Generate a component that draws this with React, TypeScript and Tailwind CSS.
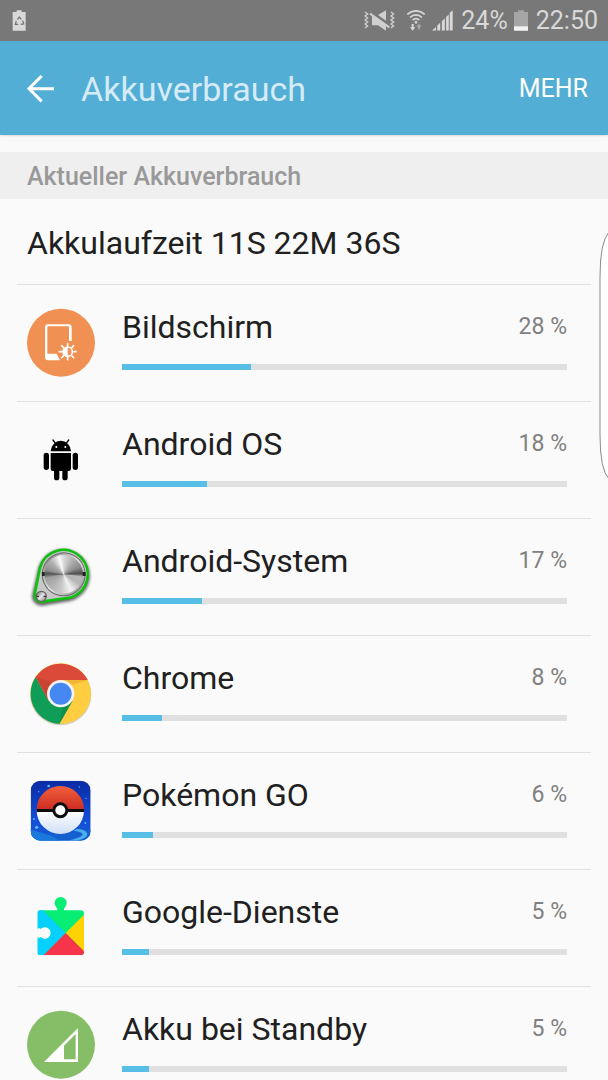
import type { ReactNode } from 'react';

interface Usage {
  name: string;
  percent: number;
  bar: number;
  icon: ReactNode;
}

const iconClass = 'w-[68px] h-[68px] shrink-0 mt-6 overflow-visible';

function ScreenIcon() {
  return (
    <svg viewBox="51 54 204 204" className={iconClass} aria-hidden="true">
      <circle cx="153" cy="155" r="102" fill="#f09052" />
      <path
        fillRule="evenodd"
        d="M114 100H176Q185 100 185 109V150H177V107Q177 106 175 106H115Q112 106 112 109V188H140L150 208H114Q105 208 105 199V109Q105 100 114 100Z"
        fill="#fff"
      />
      <g stroke="#fff" strokeWidth="5" strokeLinecap="round">
        <path d="M173 158V164M173 200V206M148 182H154M192 182H198M155 164L160 169M186 195L191 200M155 200L160 195M186 169L191 164" />
        <circle cx="173" cy="182" r="14" fill="none" strokeWidth="5" />
      </g>
      <path d="M173 168A14 14 0 0 0 173 196Z" fill="#fff" />
    </svg>
  );
}

function AndroidIcon() {
  return (
    <svg viewBox="21 16 204 204" className={iconClass} aria-hidden="true">
      <path d="M92 92A30 31 0 0 1 153 92Z" />
      <path d="M99 58L107 69M146 58L138 69" stroke="#000" strokeWidth="4" strokeLinecap="round" />
      <circle cx="109" cy="79" r="3" fill="#fff" />
      <circle cx="136" cy="79" r="3" fill="#fff" />
      <path d="M92 97H153V144Q153 151 146 151H99Q92 151 92 144Z" />
      <rect x="71" y="96" width="16" height="52" rx="8" />
      <rect x="158" y="96" width="16" height="52" rx="8" />
      <rect x="102" y="130" width="16" height="49" rx="8" />
      <rect x="127" y="130" width="16" height="49" rx="8" />
    </svg>
  );
}

function SystemIcon() {
  return (
    <svg viewBox="21 38 204 204" className={iconClass} aria-hidden="true">
      <defs>
        <filter id="systemBlur" x="-20%" y="-20%" width="140%" height="140%">
          <feGaussianBlur stdDeviation="5" />
        </filter>
        <linearGradient id="systemRim" x1="0" y1="0" x2="1" y2="1">
          <stop offset="0" stopColor="#777" />
          <stop offset="0.5" stopColor="#e4e4e4" />
          <stop offset="1" stopColor="#888" />
        </linearGradient>
      </defs>
      <path
        d="M60 112A73 73 0 1 1 150 202L66 216A22 22 0 0 1 42 192Z"
        fill="#000"
        stroke="#000"
        strokeWidth="12"
        opacity="0.6"
        filter="url(#systemBlur)"
        transform="translate(0 4)"
      />
      <path
        d="M60 112A73 73 0 1 1 150 202L66 214A20 20 0 0 1 44 192Z"
        fill="#c8c8c8"
        stroke="#10c010"
        strokeWidth="8"
      />
      <circle cx="131" cy="132" r="66" fill="#6a6a6a" />
      <circle cx="131" cy="132" r="63" fill="url(#systemRim)" />
      <foreignObject x="73" y="74" width="116" height="116">
        <div className="w-[116px] h-[116px] rounded-full bg-[conic-gradient(#d8d8d8_0deg,#b4b4b4_30deg,#8c8c8c_65deg,#4c4c4c_88deg,#b8b8b8_98deg,#b4b4b4_120deg,#f2f2f2_155deg,#c8c8c8_190deg,#b0b0b0_230deg,#a0a0a0_258deg,#505050_272deg,#909090_284deg,#b0b0b0_315deg,#fafafa_345deg,#d8d8d8_360deg)]" />
      </foreignObject>
      <path d="M66 125H74V137H66ZM188 125H197V137H188Z" fill="#222" />
      <circle cx="64" cy="198" r="17" fill="#666" />
      <circle cx="64" cy="198" r="13" fill="url(#systemRim)" />
      <path d="M50 198H57M71 198H78" stroke="#333" strokeWidth="4" />
    </svg>
  );
}

function ChromeIcon() {
  return (
    <svg viewBox="21 30 204 204" className={iconClass} aria-hidden="true">
      <circle cx="122" cy="134" r="92" fill="#000" opacity="0.18" />
      <circle cx="122" cy="131" r="91" fill="#ffcd40" />
      <path d="M47 81L86 152L158 152L118 222A91 91 0 0 1 47 81Z" fill="#109d58" />
      <path d="M47 81A91 91 0 0 1 203 90H122L86 152Z" fill="#db4a38" />
      <path d="M47 81L98 98L86 152Z" fill="#b8392b" opacity="0.5" />
      <path d="M122 90H203L160 104Z" fill="#e8a92a" opacity="0.6" />
      <path d="M158 152L118 222L128 170Z" fill="#0b8043" opacity="0.4" />
      <circle cx="122" cy="131" r="41" fill="#f4f4f4" />
      <circle cx="122" cy="131" r="33" fill="#4688f1" />
    </svg>
  );
}

function PokemonIcon() {
  return (
    <svg viewBox="21 22 204 204" className={iconClass} aria-hidden="true">
      <defs>
        <linearGradient id="pokeSky" x1="0" y1="0" x2="0" y2="1">
          <stop offset="0" stopColor="#0a2aa4" />
          <stop offset="0.7" stopColor="#1450d8" />
          <stop offset="1" stopColor="#1857d0" />
        </linearGradient>
        <linearGradient id="pokeRed" x1="0" y1="0" x2="0" y2="1">
          <stop offset="0" stopColor="#f2603c" />
          <stop offset="1" stopColor="#cc2c22" />
        </linearGradient>
        <linearGradient id="pokeWhite" x1="0" y1="0" x2="0" y2="1">
          <stop offset="0" stopColor="#fff" />
          <stop offset="1" stopColor="#d0dff6" />
        </linearGradient>
        <clipPath id="pokeClip">
          <rect x="32" y="33" width="180" height="180" rx="30" />
        </clipPath>
      </defs>
      <g clipPath="url(#pokeClip)">
        <rect x="32" y="33" width="180" height="180" fill="url(#pokeSky)" />
        <path d="M32 178Q75 196 122 192T212 180V213H32Z" fill="#1560cf" />
        <path d="M32 180Q70 190 96 200L120 213H32Z" fill="#1b78dc" />
        <path d="M160 184Q198 188 184 200Q174 206 144 213H168Q204 206 202 192Q196 178 170 178Z" fill="#4aaeee" />
        <g fill="#5eb5f5">
          <circle cx="86" cy="49" r="4" />
          <circle cx="56" cy="66" r="2" />
          <circle cx="178" cy="52" r="2" />
          <circle cx="198" cy="86" r="2" />
          <circle cx="50" cy="173" r="5" />
          <circle cx="42" cy="148" r="3" />
          <circle cx="196" cy="160" r="3" />
        </g>
      </g>
      <path d="M50 120A71 71 0 0 1 192 120Z" fill="url(#pokeRed)" />
      <path d="M50 122A71 71 0 0 0 192 122Z" fill="url(#pokeWhite)" />
      <path d="M50 118H192V127H50Z" fill="#0b0b0b" />
      <circle cx="121" cy="122" r="24" fill="#0b0b0b" />
      <circle cx="121" cy="122" r="15" fill="#fff" />
    </svg>
  );
}

function GoogleServicesIcon() {
  return (
    <svg viewBox="21 28 204 204" className={iconClass} aria-hidden="true">
      <defs>
        <clipPath id="puzzleClip">
          <path d="M62 77H112Q113 72 108 66A18 18 0 1 1 136 66Q131 72 132 77H182Q192 77 192 87V202Q192 212 182 212H62Q52 212 52 202V158Q58 162 62 158A18 18 0 1 0 62 132Q58 128 52 132V87Q52 77 62 77Z" />
        </clipPath>
      </defs>
      <g clipPath="url(#puzzleClip)">
        <rect x="52" y="30" width="140" height="182" fill="#08ee75" />
        <path d="M52 60L137 145L52 230Z" fill="#05d0fe" />
        <path d="M192 90L137 145L192 200Z" fill="#ffd200" />
        <path d="M137 145L205 213H69Z" fill="#f6354a" />
      </g>
    </svg>
  );
}

function StandbyIcon() {
  return (
    <svg viewBox="51 35 204 204" className={iconClass} aria-hidden="true">
      <circle cx="153" cy="136" r="102" fill="#86be68" />
      <path fillRule="evenodd" d="M204 86V188H102ZM197 104L162 139V180H197Z" fill="#fff" />
    </svg>
  );
}

const usages: Usage[] = [
  { name: 'Bildschirm', percent: 28, bar: 29, icon: <ScreenIcon /> },
  { name: 'Android OS', percent: 18, bar: 19, icon: <AndroidIcon /> },
  { name: 'Android-System', percent: 17, bar: 18, icon: <SystemIcon /> },
  { name: 'Chrome', percent: 8, bar: 9, icon: <ChromeIcon /> },
  { name: 'Pokémon GO', percent: 6, bar: 7, icon: <PokemonIcon /> },
  { name: 'Google-Dienste', percent: 5, bar: 6, icon: <GoogleServicesIcon /> },
  { name: 'Akku bei Standby', percent: 5, bar: 6, icon: <StandbyIcon /> },
];

function StatusBar() {
  return (
    <div className="h-[41px] shrink-0 bg-[#787878] flex items-center pl-3 pr-[10px] text-[#d9d9d9]">
      <svg viewBox="34 28 42 63" className="w-[14px] h-[21px] mr-auto" aria-hidden="true">
        <path d="M48 29H63V34H75V90H36V34H48Z" fill="#d9d9d9" />
        <g fill="none" stroke="#787878" strokeWidth="4">
          <path d="M50 57L56 49L62 56" />
          <path d="M66 60L69 70L60 71" />
          <path d="M53 71H44L47 61" />
        </g>
      </svg>

      {/* Mute, wifi and mobile signal */}
      <svg viewBox="40 28 93 63" className="w-[31px] h-[21px] mr-3" aria-hidden="true">
        <g fill="none" stroke="#d0d0d0" strokeWidth="4">
          <path d="M43 34L51 40L43 46L51 52L43 58L51 64L43 70L51 76L43 82" />
          <path d="M121 34L129 40L121 46L129 52L121 58L129 64L121 70L129 76L121 82" />
        </g>
        <path d="M82 43L106 29V60ZM64 45L106 74V90L82 74H64Z" fill="#d0d0d0" />
        <path d="M58 39L116 80" stroke="#d0d0d0" strokeWidth="6" />
      </svg>
      <svg viewBox="168 28 54 63" className="w-[18px] h-[21px] mr-[7px]" aria-hidden="true">
        <g fill="none" stroke="#d9d9d9" strokeWidth="5">
          <path d="M169 41Q195 20 221 41" />
          <path d="M177 50Q195 35 213 50" />
          <path d="M185 58Q195 50 205 58" />
        </g>
        <circle cx="195" cy="65" r="4" fill="#d9d9d9" />
        <path d="M182 70H188V80H193L185 90L177 80H182Z" fill="#d9d9d9" />
        <path d="M201 86H207V78H212L204 69L196 78H201Z" fill="#a8a8a8" />
      </svg>
      <svg viewBox="242 28 64 63" className="w-[21px] h-[21px] mr-2" aria-hidden="true">
        <path
          d="M242 90L254 79V90ZM258 75L267 66V90H258ZM272 62L281 53V90H272ZM285 49L293 41V90H285ZM296 37L305 28V90H296Z"
          fill="#d9d9d9"
        />
      </svg>

      <span className="text-[25px] leading-8 mr-[6px]">24%</span>
      <svg viewBox="486 28 42 63" className="w-[14px] h-[21px] mr-2" aria-hidden="true">
        <path d="M498 29H516V34H528V90H486V34H498Z" fill="#a6a6a6" />
        <path d="M486 77H528V90H486Z" fill="#f2f2f2" />
      </svg>
      <span className="text-[25px] leading-8">22:50</span>
    </div>
  );
}

function UsageRow({ name, percent, bar, icon }: Usage) {
  return (
    <li className="mx-[17px] px-[10px] h-[117px] shrink-0 border-t border-[#e0e0e0] flex">
      {icon}
      <div className="flex-1 min-w-0 ml-[27px] mr-[14px] pt-[22px]">
        <div className="flex items-center justify-between">
          <span className="text-[32px] leading-10 text-[#202020]">{name}</span>
          <span className="text-[23px] leading-10 text-[#808080]">{percent} %</span>
        </div>
        <div
          className="mt-[17px] h-1.5 bg-[#e0e0e0]"
          role="progressbar"
          aria-label={name}
          aria-valuenow={percent}
          aria-valuemin={0}
          aria-valuemax={100}
        >
          <div className="h-full bg-[#57bfe6]" style={{ width: `${bar}%` }} />
        </div>
      </div>
    </li>
  );
}

export default function App() {
  return (
    <div className="relative h-screen overflow-hidden flex flex-col bg-[#fafafa] font-[Roboto,sans-serif]">
      <StatusBar />

      {/* App bar */}
      <header className="h-[94px] shrink-0 bg-[#52aed5] flex items-center pl-[27px] pr-5 pt-px shadow-sm">
        <button type="button" aria-label="Zurück" className="mr-[26px] cursor-pointer">
          <svg viewBox="81 222 84 84" className="w-7 h-7" aria-hidden="true">
            <path d="M162 263H88M125 225L87 263L125 301" fill="none" stroke="#fff" strokeWidth="9" />
          </svg>
        </button>
        <h1 className="text-[34px] leading-10 text-[#d6ebf5]">Akkuverbrauch</h1>
        <button type="button" className="ml-auto text-[25px] leading-8 text-white cursor-pointer">
          MEHR
        </button>
      </header>

      <main className="flex-1 min-h-0 overflow-y-auto [scrollbar-width:none] pt-[17px]">
        <h2 className="h-[47px] px-[27px] pt-[3px] flex items-center bg-[#efefef] text-[25px] font-medium text-[#999]">
          Aktueller Akkuverbrauch
        </h2>
        <p className="h-[85px] px-[27px] pt-[3px] flex items-center text-[32px] leading-10 text-[#202020]">
          Akkulaufzeit 11S 22M 36S
        </p>
        <ul className="flex flex-col">
          {usages.map((usage) => (
            <UsageRow key={usage.name} {...usage} />
          ))}
        </ul>
      </main>

      {/* Edge panel handle */}
      <svg viewBox="0 0 9 248" className="absolute right-0 top-[232px] w-[9px] h-[248px]" aria-hidden="true">
        <path d="M10 0Q1 10 1 45V203Q1 238 10 247" fill="#fff" stroke="#8a8a8a" />
      </svg>
    </div>
  );
}
